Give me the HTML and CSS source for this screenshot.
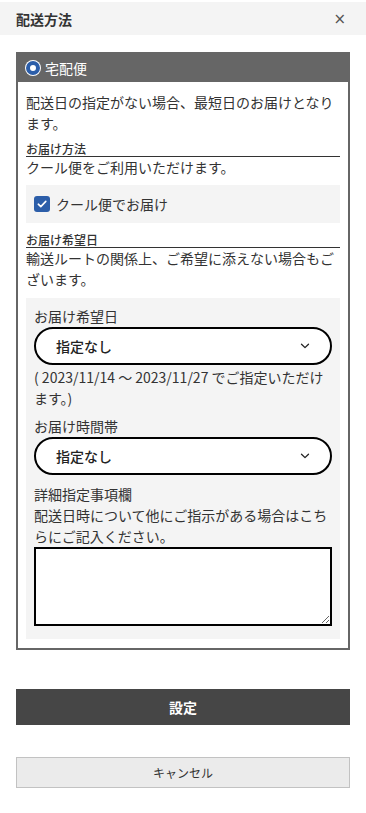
FILE: index.html
```html
<!DOCTYPE html>
<html lang="ja">
<head>
<meta charset="utf-8">
<link rel="stylesheet" href="styles.css">
</head>
<body>
<div class="topbar">
  <div class="title">配送方法</div>
  <div class="close">×</div>
</div>
<div class="main">
  <div class="box">
    <div class="box-head">
      <span class="radio"></span>
      <span class="head-text">宅配便</span>
    </div>
    <div class="box-body">
      <p class="text">配送日の指定がない場合、最短日のお届けとなります。</p>
      <div class="label">お届け方法</div>
      <p class="text">クール便をご利用いただけます。</p>
      <div class="panel check-panel">
        <span class="checkbox">
          <svg width="12" height="12" viewBox="0 0 12 12"><path d="M2.3 6.2 L4.8 8.6 L9.8 3.4" fill="none" stroke="#fff" stroke-width="1.6" stroke-linecap="round" stroke-linejoin="round"/></svg>
        </span>
        <span class="check-text">クール便でお届け</span>
      </div>
      <div class="label label2">お届け希望日</div>
      <p class="text">輸送ルートの関係上、ご希望に添えない場合もございます。</p>
      <div class="panel form-panel">
        <div class="field-label">お届け希望日</div>
        <div class="select">
          <span class="select-text">指定なし</span>
          <svg class="chev" width="10" height="6" viewBox="0 0 10 6"><path d="M1.5 1.2 L5 4.6 L8.5 1.2" fill="none" stroke="#222" stroke-width="1.3" stroke-linecap="round" stroke-linejoin="round"/></svg>
        </div>
        <p class="note">( 2023/11/14 ～ 2023/11/27 でご指定いただけます。)</p>
        <div class="field-label fl2">お届け時間帯</div>
        <div class="select">
          <span class="select-text">指定なし</span>
          <svg class="chev" width="10" height="6" viewBox="0 0 10 6"><path d="M1.5 1.2 L5 4.6 L8.5 1.2" fill="none" stroke="#222" stroke-width="1.3" stroke-linecap="round" stroke-linejoin="round"/></svg>
        </div>
        <div class="field-label fl3">詳細指定事項欄</div>
        <p class="desc">配送日時について他にご指示がある場合はこちらにご記入ください。</p>
        <textarea class="memo"></textarea>
      </div>
    </div>
  </div>
  <div class="btn-set">設定</div>
  <div class="btn-cancel">キャンセル</div>
</div>
</body>
</html>
```

FILE: styles.css
```css
* { box-sizing: border-box; }
body {
  margin: 0;
  font-family: "Noto Sans CJK JP", "Noto Sans", sans-serif;
  color: #333;
  background: #fff;
}
.topbar {
  margin-top: 2px;
  height: 33px;
  background: #f4f4f4;
  padding: 0 20px 0 16px;
  display: flex;
  align-items: center;
  justify-content: space-between;
}
.title {
  font-size: 14px;
  font-weight: 700;
  line-height: 20px;
  color: #333;
}
.close {
  font-size: 15px;
  color: #555;
  line-height: 20px;
  font-family: "DejaVu Sans", sans-serif;
}
.main {
  padding: 17px 16px 0;
}
.box {
  border: 2px solid #666;
}
.box-head {
  height: 28px;
  background: #666;
  display: flex;
  align-items: center;
  padding-left: 8px;
  gap: 5px;
}
.radio {
  width: 14px;
  height: 14px;
  border-radius: 50%;
  border: 4px solid #2c5ea9;
  background: #fff;
  box-shadow: 0 0 0 1px #fff;
}
.head-text {
  color: #fff;
  font-size: 14px;
  line-height: 20px;
}
.box-body {
  padding: 10px 8px 9px;
}
.text {
  margin: 0;
  font-size: 14px;
  line-height: 21px;
}
.label {
  margin-top: 8px;
  font-size: 12px;
  font-weight: 500;
  line-height: 14px;
  border-bottom: 1px solid #333;
}
.label2 { margin-top: 10px; }
.panel {
  background: #f4f4f4;
}
.check-panel {
  margin-top: 7px;
  height: 38px;
  display: flex;
  align-items: center;
  padding: 0 8px;
  gap: 6px;
}
.checkbox {
  width: 16px;
  height: 16px;
  border-radius: 3px;
  background: #2c5ea9;
  display: flex;
  align-items: center;
  justify-content: center;
}
.check-text {
  font-size: 14px;
  line-height: 21px;
}
.form-panel {
  margin-top: 8px;
  padding: 8px 8px 13px;
}
.field-label {
  font-size: 14px;
  line-height: 21px;
}
.fl2 { margin-top: 7px; }
.fl3 { margin-top: 9px; }
.select {
  height: 38px;
  border: 2px solid #000;
  border-radius: 19px;
  background: #fff;
  display: flex;
  align-items: center;
  justify-content: space-between;
  padding: 0 20px 0 20px;
}
.select-text {
  font-size: 14px;
  font-weight: 500;
  line-height: 21px;
  color: #222;
}
.chev { display: block; }
.note {
  margin: 2px 0 0;
  font-size: 14px;
  line-height: 21px;
}
.desc {
  margin: 0;
  font-size: 14px;
  line-height: 21px;
}
.memo {
  display: block;
  width: 100%;
  height: 79px;
  border: 2px solid #000;
  border-radius: 0;
  background: #fff;
  margin: 0;
  padding: 4px;
  font-family: inherit;
  outline: none;
}
.btn-set {
  margin-top: 39px;
  height: 36px;
  background: #464646;
  color: #fff;
  font-size: 14px;
  font-weight: 700;
  display: flex;
  align-items: center;
  justify-content: center;
}
.btn-cancel {
  margin-top: 32px;
  height: 31px;
  background: #ebebeb;
  border: 1px solid #c2c2c2;
  color: #333;
  font-size: 12px;
  display: flex;
  align-items: center;
  justify-content: center;
}
```
